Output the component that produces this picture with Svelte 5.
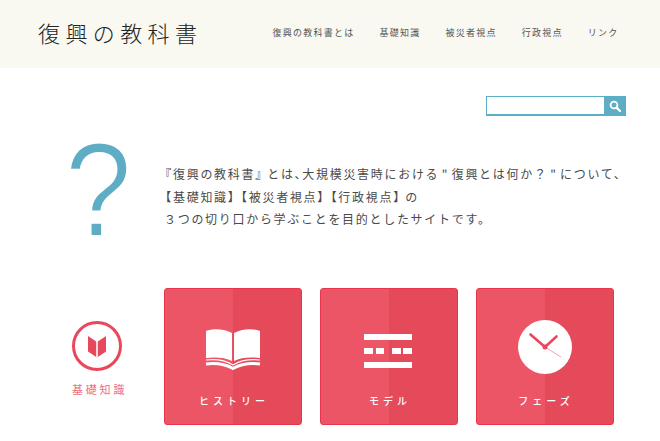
<script lang="ts">
const nav = ["復興の教科書とは", "基礎知識", "被災者視点", "行政視点", "リンク"];
</script>

<header class="site-header">
  <div class="logo">復興の教科書</div>
  <nav class="nav">
    {#each nav as item}
      <span>{item}</span>
    {/each}
  </nav>
</header>

<main>
  <div class="search-row">
    <div class="search">
      <input type="text" aria-label="search" />
      <button aria-label="search">
        <svg width="12" height="12" viewBox="0 0 12 12">
          <circle cx="5" cy="5" r="3.4" fill="none" stroke="#fff" stroke-width="1.8" />
          <path d="M7.6 7.6 L11 11" stroke="#fff" stroke-width="2.2" stroke-linecap="round" />
        </svg>
      </button>
    </div>
  </div>

  <section class="intro">
    <div class="mark">?</div>
    <p>
      <span class="lead">『</span>復興の教科書<span class="end">』</span>とは<span class="half">、</span>大規模災害時における<span class="quote">"</span>復興とは何か？<span class="quote">"</span>について、<br />
      <span class="lead">【</span>基礎知識<span class="close">】</span><span class="open">【</span>被災者視点<span class="close">】</span><span class="open">【</span>行政視点<span class="end">】</span>の<br />
      ３つの切り口から学ぶことを目的としたサイトです。
    </p>
  </section>

  <section class="basics">
    <div class="section-label">
      <div class="badge">
        <svg width="18" height="21" viewBox="0 0 18 21">
          <path d="M0 0 L8.200 5.500 V21 L0 15.500 Z M9.800 5.500 L18 0 V15.500 L9.800 21 Z" fill="#e8485c" />
        </svg>
      </div>
      <span>基礎知識</span>
    </div>
    <div class="cards">
      <div class="card">
        <div class="icon">
          <svg width="56" height="42" viewBox="0 0 56 42">
            <path d="M1 3 C9 0 20 1 27 5 V33 C20 29 9 29 1 30 Z M29 5 C36 1 47 0 55 3 V30 C47 29 36 29 29 33 Z" fill="#fff" />
            <path d="M1 32 C10 31 20 32 28 37 C36 32 46 31 55 32" fill="none" stroke="#fff" stroke-width="1.200" />
            <path d="M1 36 C10 35 20 36 28 40.500 C36 36 46 35 55 36" fill="none" stroke="#fff" stroke-width="3" />
          </svg>
        </div>
        <span>ヒストリー</span>
      </div>
      <div class="card">
        <div class="icon">
          <svg class="model" width="48" height="34" viewBox="0 0 48 34">
            <path d="M0 0 H48 V6 H0 Z M0 14 H9 V20 H0 Z M12 14 H20 V20 H12 Z M28 14 H37 V20 H28 Z M39 14 H48 V20 H39 Z M0 28 H48 V34 H0 Z" fill="#fff" />
          </svg>
        </div>
        <span>モデル</span>
      </div>
      <div class="card">
        <div class="icon">
          <svg class="clock" width="54" height="54" viewBox="0 0 54 54">
            <circle cx="27" cy="27" r="27" fill="#fff" />
            <path d="M27 27 L12.500 14.500 M27 27 L38.500 16.500" stroke="#e8485c" stroke-width="2.600" stroke-linecap="round" />
            <path d="M27 27 L43 37" stroke="#f3a3ad" stroke-width="1" />
            <circle cx="27" cy="27" r="2.500" fill="#e8485c" />
          </svg>
        </div>
        <span>フェーズ</span>
      </div>
    </div>
  </section>
</main>

<style>
  :global(body) { margin: 0; background: #fff; overflow: hidden; }
  .site-header, main { font-family: "Noto Sans CJK JP", "Noto Sans", sans-serif; }
  .site-header { height: 68px; background: #f9f8f1; display: flex; align-items: center; justify-content: space-between; padding: 0 41.500px 4px 38px; box-sizing: border-box; }
  .logo { font-size: 22px; font-weight: 300; letter-spacing: 5.4px; color: #222; white-space: nowrap; }
  .nav { display: flex; gap: 25px; font-size: 9px; letter-spacing: 1.25px; color: #555; white-space: nowrap; }
  .search-row { display: flex; justify-content: flex-end; padding: 28px 34px 0 0; }
  .search { display: flex; width: 140px; height: 20px; box-sizing: border-box; border: 1px solid #5aaec6; border-bottom-width: 2px; }
  .search input { flex: 1; min-width: 0; border: 0; padding: 0; background: #fff; outline: 0; }
  .search button { width: 21px; border: 0; padding: 0; background: #5eadc5; display: flex; align-items: center; justify-content: center; }
  .intro { display: flex; align-items: flex-start; padding: 0 0 0 65px; height: 172px; }
  .mark { width: 99px; flex: none; margin-top: -1px; font-family: "Liberation Sans", sans-serif; font-size: 133px; line-height: 150px; color: #5eadc5; -webkit-text-stroke: 2px #fff; transform: scaleX(0.9); transform-origin: 0 0; }
  p { margin: 47px 0 0; font-size: 12px; line-height: 22.5px; letter-spacing: 1.7px; color: #4a4a4a; white-space: nowrap; }
  .half, .lead, .end, .open, .close { font-feature-settings: "halt"; }
  .lead { padding-left: 1.3px; }
  .end { padding-right: 4.3px; }
  .open { padding-left: 2.8px; }
  .close { padding-right: 2.8px; }
  .quote { padding: 0 2.5px; }
  .basics { display: flex; align-items: flex-start; padding-left: 72px; }
  .section-label { width: 92px; flex: none; padding-top: 33px; color: #ee6f7e; font-size: 11px; letter-spacing: 2.8px; line-height: 14px; white-space: nowrap; }
  .badge { width: 50px; height: 50px; margin-bottom: 11px; box-sizing: border-box; border: 3px solid #e8485c; border-radius: 50%; display: flex; align-items: center; justify-content: center; }
  .cards { display: flex; gap: 18px; }
  .card { width: 138px; height: 137px; box-sizing: border-box; border: 1px solid #e8354c; border-radius: 3px; background: linear-gradient(90deg, #eb5566 50%, #e54a5a 50%); display: flex; flex-direction: column; align-items: center; color: #fff; font-size: 10px; font-weight: 500; letter-spacing: 4px; }
  .icon { height: 104px; display: flex; align-items: center; justify-content: center; padding-top: 15px; box-sizing: border-box; }
  .model { margin: 4px 2px 0 0; }
  .clock { margin-bottom: 4px; }
  .card span { line-height: 14px; margin-top: 1px; padding-left: 2px; }
</style>
